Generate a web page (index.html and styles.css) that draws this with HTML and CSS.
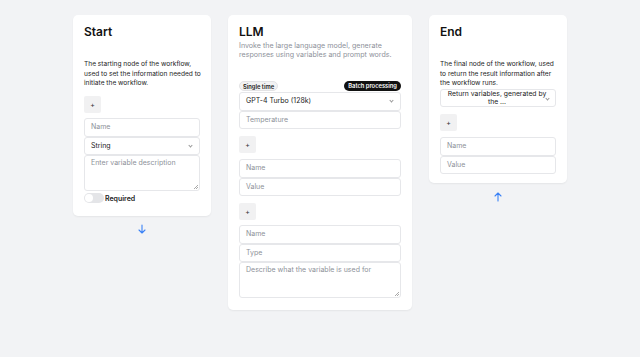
FILE: index.html
```html
<!DOCTYPE html>
<html>
<head>
<meta charset="utf-8">
<link rel="stylesheet" href="styles.css">
</head>
<body>
<div class="board">
  <div class="column">
    <div class="card card-narrow card-start">
      <h2 class="title">Start</h2>
      <p class="desc desc-dark desc-low">The starting node of the workflow, used to set the information needed to initiate the workflow.</p>
      <button class="plus plus-start">+</button>
      <div class="field">Name</div>
      <div class="field select filled">String<span class="chev"></span></div>
      <div class="field area">Enter variable description<span class="grip"></span></div>
      <div class="toggle-row"><span class="toggle"><span class="knob"></span></span><span class="toggle-label">Required</span></div>
    </div>
    <div class="arrow arrow-start">
      <svg width="10" height="10" viewBox="0 0 10 10"><path d="M5 1v8M2 6l3 3 3-3" fill="none" stroke="#3b82f6" stroke-width="1.1" stroke-linecap="round" stroke-linejoin="round"/></svg>
    </div>
  </div>

  <div class="column">
    <div class="card card-wide">
      <h2 class="title">LLM</h2>
      <p class="desc desc-gray">Invoke the large language model, generate responses using variables and prompt words.</p>
      <div class="badges">
        <span class="badge badge-light">Single time</span>
        <span class="badge badge-dark">Batch processing</span>
      </div>
      <div class="field select filled">GPT-4 Turbo (128k)<span class="chev"></span></div>
      <div class="field">Temperature</div>
      <button class="plus plus-first">+</button>
      <div class="field">Name</div>
      <div class="field">Value</div>
      <button class="plus plus-second">+</button>
      <div class="field">Name</div>
      <div class="field">Type</div>
      <div class="field area">Describe what the variable is used for<span class="grip"></span></div>
    </div>
  </div>

  <div class="column">
    <div class="card card-narrow card-end">
      <h2 class="title">End</h2>
      <p class="desc desc-dark desc-low">The final node of the workflow, used to return the result information after the workflow runs.</p>
      <div class="field select select-center filled">Return variables, generated by the ...<span class="chev"></span></div>
      <button class="plus plus-end">+</button>
      <div class="field">Name</div>
      <div class="field">Value</div>
    </div>
    <div class="arrow arrow-end">
      <svg width="10" height="10" viewBox="0 0 10 10"><path d="M5 9V1M2 4l3-3 3 3" fill="none" stroke="#3b82f6" stroke-width="1.1" stroke-linecap="round" stroke-linejoin="round"/></svg>
    </div>
  </div>
</div>
</body>
</html>
```

FILE: styles.css
```css
* { box-sizing: border-box; }
html, body { margin: 0; padding: 0; }
body {
  background: #f2f3f5;
  font-family: Inter, "Noto Sans", "Liberation Sans", sans-serif;
  width: 640px;
  height: 357px;
  overflow: hidden;
}
.board {
  display: flex;
  justify-content: center;
  align-items: flex-start;
  gap: 17px;
  padding-top: 15px;
}
.column {
  display: flex;
  flex-direction: column;
  align-items: center;
}
.card {
  background: #fff;
  border-radius: 5px;
  box-shadow: 0 1px 2px rgba(0,0,0,0.06);
  padding: 9px 11px 11px 11px;
  display: flex;
  flex-direction: column;
}
.card-narrow { width: 138px; }
.card-start { padding-bottom: 13px; }
.card-end { padding-bottom: 9px; }
.card-wide { width: 184px; padding-bottom: 12px; }
.title {
  margin: 0;
  font-size: 12px;
  line-height: 16px;
  font-weight: 600;
  color: #111;
}
.desc {
  margin: 0;
}
.desc-dark {
  color: #222;
  font-size: 6.6px;
  line-height: 9.5px;
  margin-right: -3px;
}
.desc-low { margin-top: 20px; }
.desc-gray {
  color: #8d9199;
  margin-top: 1px;
  font-size: 7.1px;
  line-height: 9px;
}
.plus {
  width: 17px;
  height: 17px;
  border: none;
  background: #f1f1f2;
  border-radius: 2px;
  font-size: 7px;
  color: #333;
  padding: 0;
  font-family: inherit;
  line-height: 17px;
}
.plus-start { margin: 7.5px 0 5px 0; }
.plus-first { margin: 7px 0 6px 0; }
.plus-second { margin: 7px 0 5px 0; }
.plus-end { margin: 7px 0 6px 0; }
.field {
  position: relative;
  height: 18.5px;
  border: 1px solid #e6e7ea;
  border-radius: 3px;
  font-size: 7px;
  color: #8d9199;
  padding: 0 6px;
  line-height: 16.5px;
  background: #fff;
}
.field.filled { color: #222; }
.area { height: 36px; line-height: 14px; }
.grip {
  position: absolute;
  right: 1px;
  bottom: 1px;
  width: 4px;
  height: 4px;
  background: linear-gradient(135deg, transparent 50%, #aaa 50%, #aaa 60%, transparent 60%, transparent 75%, #aaa 75%, #aaa 85%, transparent 85%);
}
.chev {
  position: absolute;
  right: 7px;
  top: 6px;
  width: 3px;
  height: 3px;
  border-right: 0.8px solid #999;
  border-bottom: 0.8px solid #999;
  transform: rotate(45deg);
}
.select-center {
  height: 18.5px;
  text-align: center;
  font-size: 6.8px;
  line-height: 8.5px;
  padding: 0 8px 0 6px;
}
.select-center .chev { top: 7px; right: 6px; }
.toggle-row {
  display: flex;
  align-items: center;
  margin-top: 2px;
}
.toggle {
  width: 20px;
  height: 10px;
  border-radius: 5px;
  background: #e4e5e8;
  position: relative;
  margin-right: 1px;
}
.knob {
  position: absolute;
  left: 1px;
  top: 1px;
  width: 8px;
  height: 8px;
  border-radius: 50%;
  background: #fff;
}
.toggle-label {
  font-size: 7px;
  font-weight: 600;
  color: #222;
}
.badges {
  display: flex;
  justify-content: space-between;
  align-items: center;
  margin-top: 22px;
  margin-bottom: 1px;
}
.badge {
  font-size: 5.8px;
  font-weight: 600;
  border-radius: 5px;
  padding: 0 3px;
  height: 10px;
  line-height: 10px;
}
.badge-light { background: #f2f2f3; color: #222; border: 0.5px solid #e3e3e5; line-height: 9px; }
.badge-dark { background: #111; color: #fff; padding: 0 4px; }
.arrow { display: flex; justify-content: center; }
.arrow-start { margin-top: 8px; }
.arrow-end { margin-top: 9px; }
```
